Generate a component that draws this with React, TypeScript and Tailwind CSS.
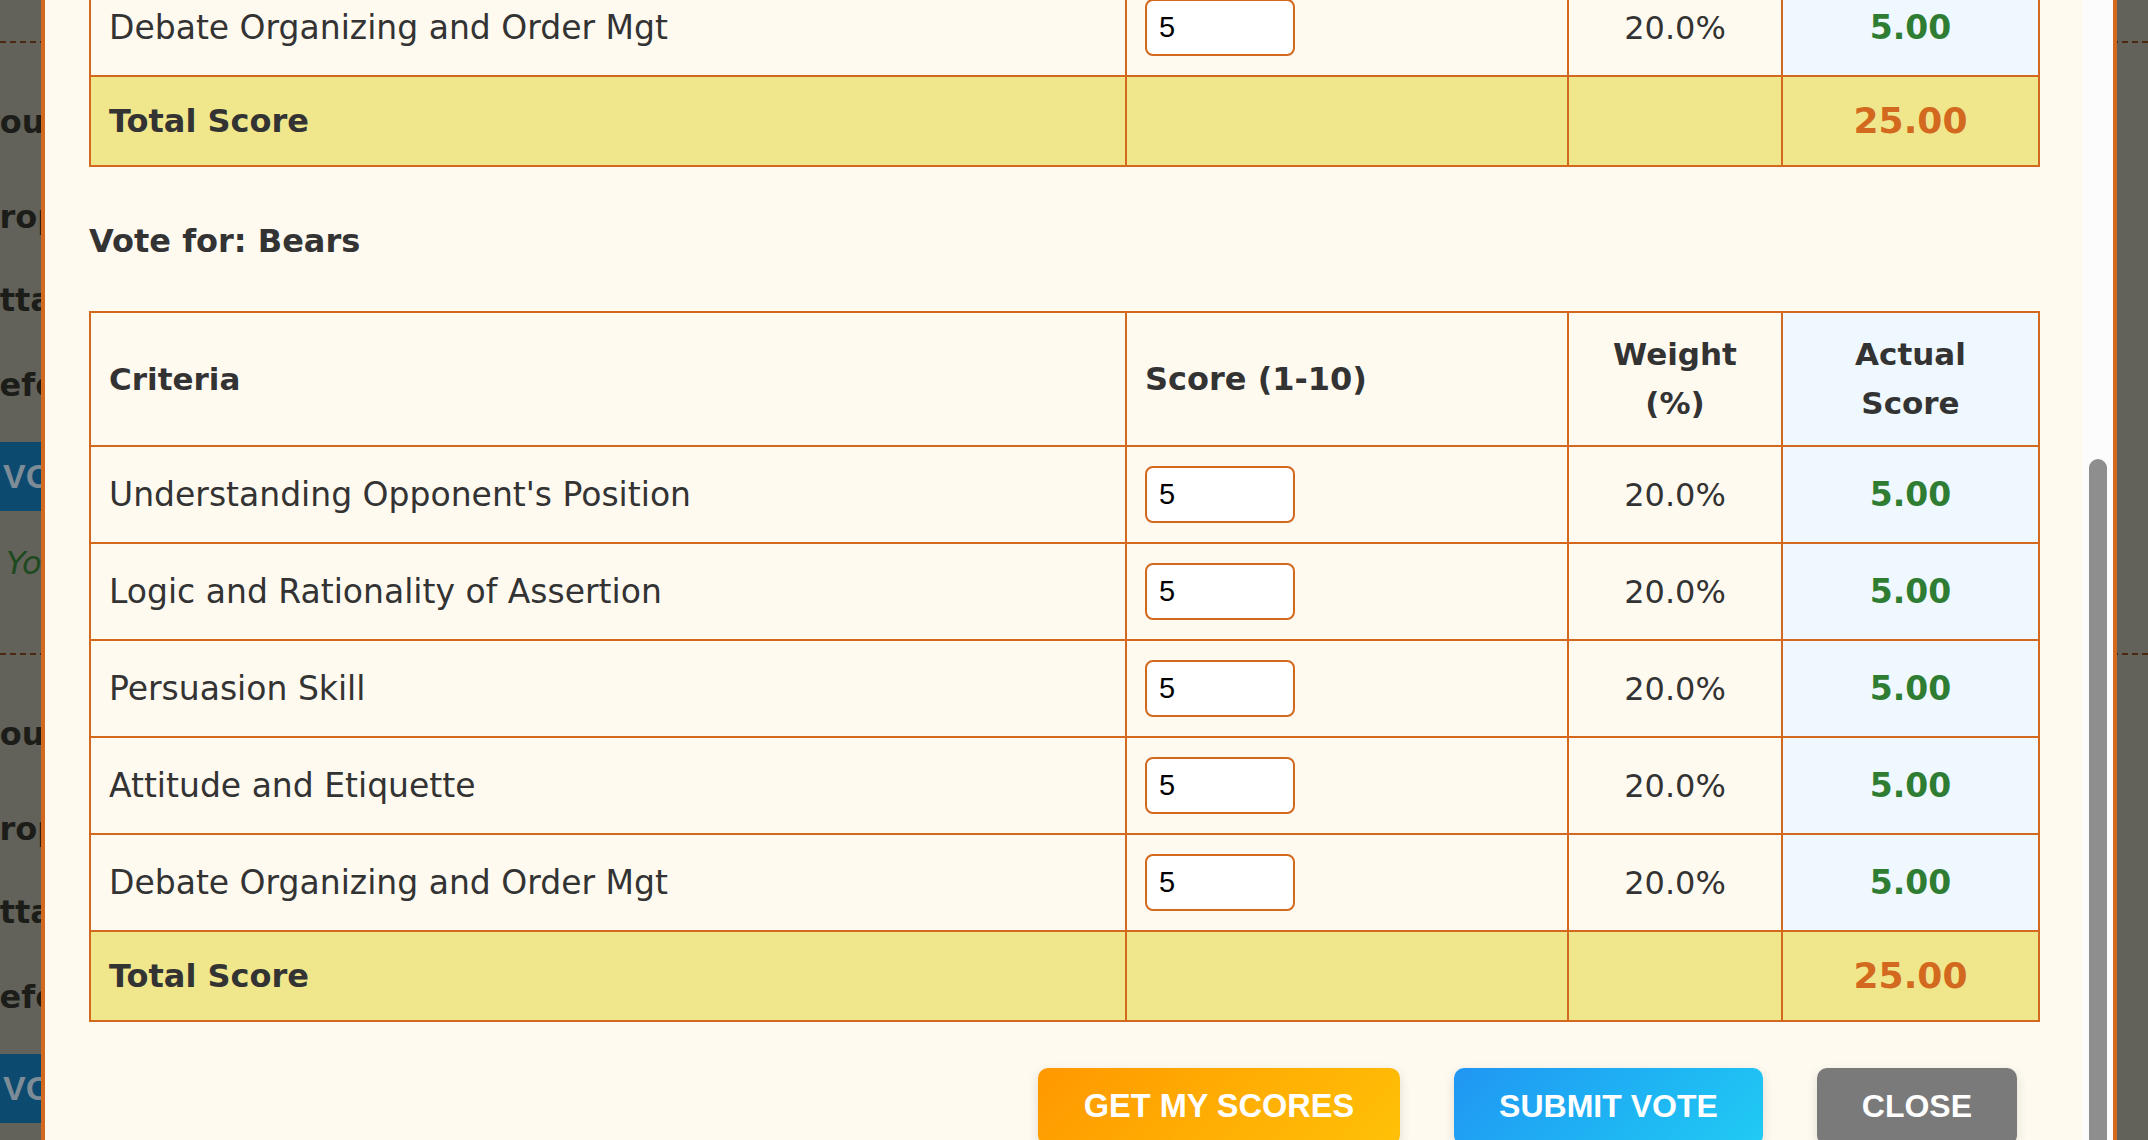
import React from 'react';

const CRITERIA = [
  "Understanding Opponent's Position",
  'Logic and Rationality of Assertion',
  'Persuasion Skill',
  'Attitude and Etiquette',
  'Debate Organizing and Order Mgt',
];

const comic = "font-['Comic_Sans_MS','DejaVu_Sans',sans-serif]";
const cell = 'border-2 border-[#d2691e] px-[18px] py-[19px]';

function ScoreTable() {
  return (
    <table className="w-full table-fixed border-collapse text-[#333]">
      <colgroup>
        <col className="w-[1036px]" />
        <col className="w-[442px]" />
        <col className="w-[214px]" />
        <col className="w-[257px]" />
      </colgroup>
      <thead>
        <tr className="text-[31px] font-bold leading-[49px]">
          <th className="border-2 border-[#d2691e] px-[18px] py-[17px] text-left">Criteria</th>
          <th className="border-2 border-[#d2691e] px-[18px] py-[17px] text-left text-[32px]">Score (1-10)</th>
          <th className="border-2 border-[#d2691e] px-[18px] py-[17px] text-center">
            Weight
            <br />
            (%)
          </th>
          <th className="border-2 border-[#d2691e] bg-[#f0f8ff] px-[18px] py-[17px] text-center">
            Actual
            <br />
            Score
          </th>
        </tr>
      </thead>
      <tbody>
        {CRITERIA.map((c) => (
          <tr key={c}>
            <td className={`${cell} text-[33px]`}>{c}</td>
            <td className={cell}>
              <input
                type="text"
                inputMode="numeric"
                defaultValue="5"
                className="block h-[57px] w-[150px] rounded-[8px] border-2 border-[#d2691e] bg-white px-[12px] font-['Liberation_Sans',Arial,sans-serif] text-[29px] text-black outline-none"
              />
            </td>
            <td className={`${cell} text-center text-[32px]`}>20.0%</td>
            <td className={`${cell} bg-[#f0f8ff] text-center text-[33px] font-bold text-[#2e7d32]`}>5.00</td>
          </tr>
        ))}
        <tr className="bg-[#f0e68c] leading-[50px]">
          <td className={`${cell} text-[32px] font-bold`}>Total Score</td>
          <td className={cell}></td>
          <td className={cell}></td>
          <td className={`${cell} text-center text-[36px] font-bold text-[#d2691e]`}>25.00</td>
        </tr>
      </tbody>
    </table>
  );
}

// page behind the modal, only a sliver of it shows on the left
function BehindCard() {
  const line = 'flex h-[48px] w-[41px] items-center overflow-hidden whitespace-nowrap text-[32px] font-bold text-[#1c1c19]';
  return (
    <div className={`flex flex-col border-t-2 border-dashed border-[#4a2810] pb-[66px] ${comic}`}>
      <div className={`mt-[55px] ${line}`}>
        <span className="-ml-[25px]">Round</span>
      </div>
      <div className={`mt-[47px] ${line}`}>
        <span className="-ml-[24px]">Proposition</span>
      </div>
      <div className={`mt-[35px] ${line}`}>
        <span className="-ml-[25px]">Attack</span>
      </div>
      <div className={`mt-[37px] ${line}`}>
        <span className="-ml-[27px]">Defense</span>
      </div>
      <div className="mt-[33px] flex h-[69px] w-[41px] items-center overflow-hidden bg-[#0c4a70] pl-[3px] font-['Liberation_Sans',Arial,sans-serif] text-[34px] font-bold whitespace-nowrap text-[#7d8c96]">
        VOTE
      </div>
      <div className="mt-[28px] flex h-[48px] w-[41px] items-center overflow-hidden whitespace-nowrap pl-[6px] text-[32px] italic text-[#1f4a1f]">
        You
      </div>
    </div>
  );
}

export default function App() {
  return (
    <div className="relative h-[1140px] w-full overflow-hidden bg-[#62625a]">
      <div className="flex flex-col pt-[41px]">
        <BehindCard />
        <BehindCard />
      </div>

      {/* Modal */}
      <div className="absolute left-[41px] top-0 flex h-full w-[2076px] border-x-4 border-[#d2691e] bg-[#fefaf0]">
        <div className={`min-w-0 flex-1 overflow-hidden pl-[44px] pr-[45px] ${comic}`}>
          <div className="-mt-[544px]">
            <ScoreTable />
            <h4 className="mb-[46px] mt-[50px] text-[32px] font-bold leading-[48px] text-[#333]">Vote for: Bears</h4>
            <ScoreTable />
            <div className="mt-[46px] flex justify-end gap-[54px] pr-[21px] font-['Liberation_Sans',Arial,sans-serif]">
              <button className="rounded-[10px] bg-linear-135 from-[#ff9800] to-[#ffc107] px-[46px] py-[20px] text-[32.5px] font-bold uppercase leading-[37px] text-white shadow-[0_4px_12px_rgba(0,0,0,0.12)]">
                Get My Scores
              </button>
              <button className="rounded-[10px] bg-linear-135 from-[#2196f3] to-[#21cbf3] px-[45px] py-[20px] text-[32px] font-bold uppercase leading-[37px] text-white shadow-[0_4px_12px_rgba(0,0,0,0.12)]">
                Submit Vote
              </button>
              <button className="rounded-[10px] bg-[#7a7a7a] px-[45px] py-[20px] text-[32px] font-bold uppercase leading-[37px] text-white shadow-[0_4px_12px_rgba(0,0,0,0.12)]">
                Close
              </button>
            </div>
          </div>
        </div>
        {/* scrollbar */}
        <div className="w-[30px] shrink-0 bg-[#fcfcfc]">
          <div className="mx-auto mt-[459px] h-[760px] w-[18px] rounded-t-[9px] bg-[#8e8e8e]"></div>
        </div>
      </div>
    </div>
  );
}
